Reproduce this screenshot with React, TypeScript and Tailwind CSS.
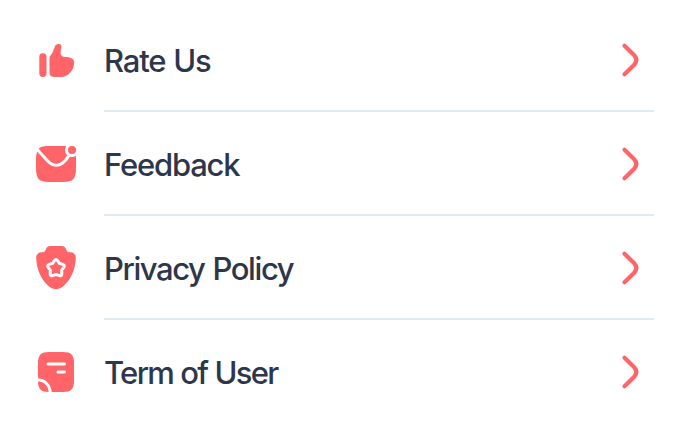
import type { ReactNode } from "react";

function ThumbIcon() {
  return (
    <svg className="size-12 text-[#ff6568]" viewBox="32 36 48 48" fill="currentColor" aria-hidden="true">
      <rect x="39.3" y="53.2" width="7.2" height="23.8" rx="3.4" />
      <path d="M49.5 58.2C49.5 57 49.9 56 50.7 55.2C52.8 52.8 53.9 49.6 54.8 46.6C55.3 44.7 56.9 43.8 58.6 43.9C60.9 44 61.8 45.5 61.4 47.4L60.7 51.2C60.1 54 61.4 56.3 63.8 56.8C67.3 57.3 74.2 57.2 74.2 62.4C74.2 66.5 72.4 70.4 69.6 73.3C67.2 75.8 64.2 77 60.6 77H54.2C51.2 77 49.5 75.4 49.5 72.7Z" />
    </svg>
  );
}

function MailIcon() {
  return (
    <svg className="size-12 text-[#ff6568]" viewBox="32 140 48 48" fill="currentColor" aria-hidden="true">
      <path d="M47 146H65C76 146 76 150 76 158V168C76 179 73 182 63 182H49C39 182 36 179 36 168V160C36 149 39 146 47 146Z" />
      <path d="M35 147L46.5 159.8Q56 170.6 65.5 160.2L69.5 155" fill="none" stroke="white" strokeWidth="3" />
      <circle cx="72" cy="150" r="7" fill="white" />
      <circle cx="72" cy="150" r="4.1" />
    </svg>
  );
}

function ShieldIcon() {
  return (
    <svg className="size-12 text-[#ff6568]" viewBox="32 244 48 48" fill="currentColor" aria-hidden="true">
      <path d="M50.5 246H61.5C64 246 65.2 247 66 249C67 251.7 67.8 252.3 70.5 252.3C74 252.3 76 254.7 75.8 258.5C75.2 269.5 71.2 279.3 63.5 286C58.5 290.2 53.5 290.2 48.5 286C40.8 279.3 36.8 269.5 36.2 258.5C36 254.7 38 252.3 41.5 252.3C44.2 252.3 45 251.7 46 249C46.8 247 48 246 50.5 246Z" />
      <path d="M54.4 260.7Q56 258.5 57.6 260.7L59.4 263.4L62.8 264.4Q65.2 265.4 63.8 267.4L61.7 270.1L61.8 273.9Q61.8 276.3 59.4 275.6L56 274.4L52.6 275.6Q50.2 276.3 50.2 273.9L50.3 270.1L48.2 267.4Q46.8 265.4 49.2 264.4L52.6 263.4Z" fill="none" stroke="white" strokeWidth="3" strokeLinejoin="round" />
    </svg>
  );
}

function DocumentIcon() {
  return (
    <svg className="size-12 text-[#ff6568]" viewBox="32 348 48 48" aria-hidden="true">
      <path d="M49 352H63C71 352 74 355 74 363V381C74 389 71 392 63 392H49C41 392 38 389 38 381V363C38 355 41 352 49 352Z" fill="currentColor" />
      <path d="M48 364H64.5M58 372H64.5" fill="none" stroke="white" strokeWidth="3" strokeLinecap="round" />
      <path d="M37 379.8C44.6 379.8 50.2 385.4 50.2 393" fill="none" stroke="white" strokeWidth="3" />
    </svg>
  );
}

function Chevron() {
  return (
    <svg className="h-10 w-6" viewBox="618 40 24 40" fill="none" stroke="#ff6568" strokeWidth="4.2" strokeLinecap="round" aria-hidden="true">
      <path d="M624.5 45.8L634 55Q638.6 60 634 65L624.5 74.2" />
    </svg>
  );
}

const rows: { label: string; icon: ReactNode; spacing: string }[] = [
  { label: "Rate Us", icon: <ThumbIcon />, spacing: "tracking-[-1.2px] [word-spacing:1px]" },
  { label: "Feedback", icon: <MailIcon />, spacing: "tracking-[-1.2px]" },
  { label: "Privacy Policy", icon: <ShieldIcon />, spacing: "tracking-[-1.42px] [word-spacing:1.2px]" },
  { label: "Term of User", icon: <DocumentIcon />, spacing: "tracking-[-1.7px] [word-spacing:0.6px]" },
];

export default function App() {
  return (
    <main className="h-[432px] w-[686px] overflow-hidden bg-white pt-2 pl-8 font-['Inter',sans-serif]">
      {rows.map((row, index) => (
        <div key={row.label} className="flex h-[104px] w-[622px]">
          <div className="flex w-[72px] items-center">{row.icon}</div>
          <button
            type="button"
            className={`flex flex-1 items-center justify-between border-b-2 pt-0.5 pr-3 text-left ${index < rows.length - 1 ? "border-[#e1eaf2]" : "border-transparent"}`}
          >
            <span className={`pt-0.5 text-[31px] leading-10 font-medium whitespace-nowrap text-[#2e364c] ${row.spacing}`}>{row.label}</span>
            <Chevron />
          </button>
        </div>
      ))}
    </main>
  );
}
